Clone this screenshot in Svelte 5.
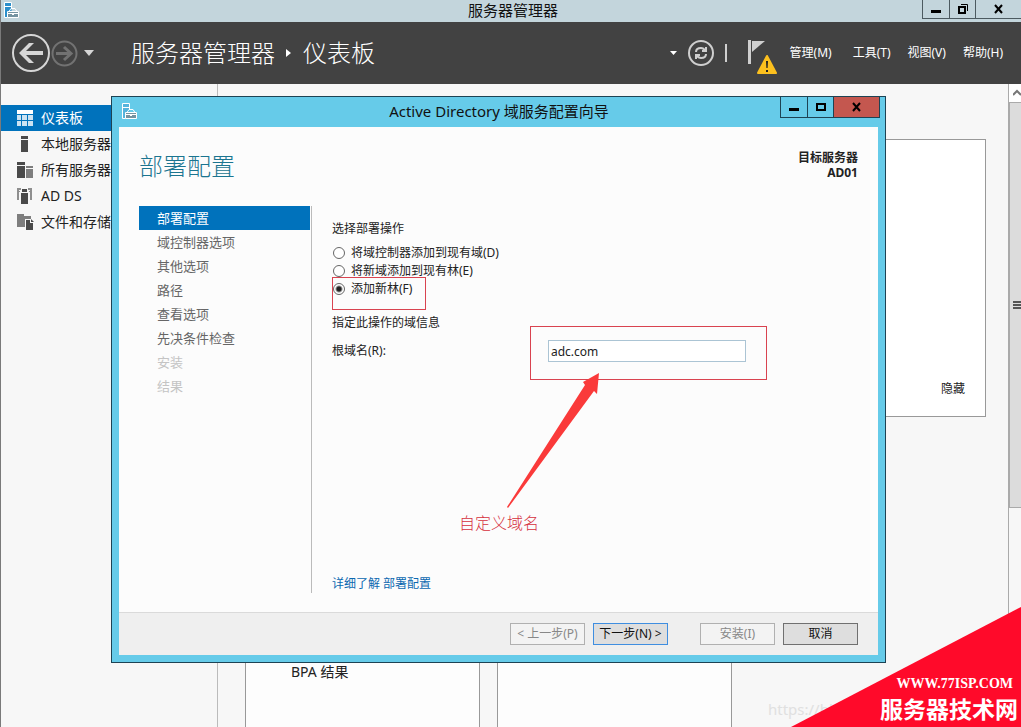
<script lang="ts">
  type NavItem = { id: string; label: string; icon: string };
  type Step = { label: string; disabled?: boolean };

  const navItems: NavItem[] = [
    { id: 'dashboard', label: '仪表板', icon: 'grid' },
    { id: 'local', label: '本地服务器', icon: 'server' },
    { id: 'all', label: '所有服务器', icon: 'servers' },
    { id: 'adds', label: 'AD DS', icon: 'adds' },
    { id: 'files', label: '文件和存储服务', icon: 'files' },
  ];

  const menus = ['管理(M)', '工具(T)', '视图(V)', '帮助(H)'];

  const steps: Step[] = [
    { label: '部署配置' },
    { label: '域控制器选项' },
    { label: '其他选项' },
    { label: '路径' },
    { label: '查看选项' },
    { label: '先决条件检查' },
    { label: '安装', disabled: true },
    { label: '结果', disabled: true },
  ];

  const operations = [
    { value: 'dc', label: '将域控制器添加到现有域(D)' },
    { value: 'domain', label: '将新域添加到现有林(E)' },
    { value: 'forest', label: '添加新林(F)' },
  ];

  let activeNav = $state('dashboard');
  let activeStep = $state(0);
  let operation = $state('forest');
  let rootDomain = $state('adc.com');
</script>

{#snippet appIcon(fill: string)}
  <svg class="app-icon" width="17" height="17" viewBox="0 0 17 17" aria-hidden="true">
    <path d="M1.500 .500h7v15h-7z" {fill} />
    <path d="M8.500 7V.5h-7v15h3M1.500 4.500h7" fill="none" stroke="#fff" />
    <path d="M4.500 9.500h11v6h-11z" fill="#7593a0" stroke="#fff" />
    <path d="M6 9.500l2-3h4l2 3M5 11.500h10" fill="none" stroke="#fff" />
    <path d="M9 11h2v2H9z" fill="#fff" />
  </svg>
{/snippet}

<div class="app">
  <header class="titlebar">
    {@render appIcon('#2b8fcb')}
    <div class="titlebar-text">服务器管理器</div>
    <div class="window-buttons">
      <button class="min" aria-label="最小化">
        <svg width="12" height="12" viewBox="0 0 12 12"><path d="M1 7h10v3H1z" /></svg>
      </button>
      <button class="max" aria-label="还原">
        <svg width="12" height="12" viewBox="0 0 12 12">
          <path d="M2 4h6v6H2z" fill="none" stroke="#000" stroke-width="2" />
          <path d="M4 1.500h6.500V8" fill="none" stroke="#000" />
        </svg>
      </button>
      <button class="close" aria-label="关闭">
        <svg width="12" height="12" viewBox="0 0 12 12">
          <path d="M2 2l7 8M9 2l-7 8" stroke="#000" stroke-width="2" />
        </svg>
      </button>
    </div>
  </header>

  <div class="toolbar">
    <button class="icon-button" aria-label="后退">
      <svg width="40" height="40" viewBox="0 0 40 40">
        <circle cx="20" cy="20" r="18" fill="none" stroke="#d6d6d6" stroke-width="2" />
        <path d="M8 20L18 10h5l-8 8h17v4H15l8 8h-5z" fill="#d6d6d6" />
      </svg>
    </button>
    <button class="icon-button" aria-label="前进">
      <svg width="27" height="27" viewBox="0 0 27 27">
        <circle cx="13.500" cy="13.500" r="12" fill="none" stroke="#727272" stroke-width="2" />
        <path d="M5 13.500h15M13 7l7 6.500-7 6.500" fill="none" stroke="#727272" stroke-width="3" />
      </svg>
    </button>
    <button class="icon-button history" aria-label="历史记录">
      <svg width="12" height="6" viewBox="0 0 12 6"><path d="M1 0h10L6 6z" fill="#d6d6d6" /></svg>
    </button>

    <div class="breadcrumb">
      <span>服务器管理器</span>
      <svg width="6" height="10" viewBox="0 0 6 10"><path d="M0 1l5 4-5 4z" fill="#fff" /></svg>
      <span>仪表板</span>
    </div>

    <div class="toolbar-right">
      <button class="icon-button" aria-label="更多">
        <svg width="8" height="5" viewBox="0 0 8 5"><path d="M0 0h7L3.500 4z" fill="#fff" /></svg>
      </button>
      <button class="icon-button refresh" aria-label="刷新">
        <svg width="28" height="28" viewBox="0 0 28 28" fill="none" stroke="#cfcfcf">
          <circle cx="14" cy="14" r="12" stroke-width="2" />
          <path d="M9 13c0-3 2-4 5-4 2 0 3 1 4 2M19 8v4h-4" stroke-width="2" />
          <path d="M19 15c0 3-2 4-5 4-2 0-3-1-4-2M9 20v-4h4" stroke-width="2" />
        </svg>
      </button>
      <span class="separator"></span>
      <button class="icon-button flag" aria-label="通知">
        <svg width="31" height="37" viewBox="0 0 31 37">
          <path d="M1 2h3v24H1z" fill="#cfcfcf" />
          <path d="M5 3h13L5 14z" fill="#cfcfcf" />
          <path d="M20 18l9 17H11z" fill="#fcc01e" stroke="#fcc01e" stroke-width="2" stroke-linejoin="round" />
          <path d="M19 23h2l-.4 7h-1.200zM19 32h2v2h-2z" fill="#222" />
        </svg>
      </button>
      <nav class="menus">
        {#each menus as menu}
          <button>{menu}</button>
        {/each}
      </nav>
    </div>
  </div>

  <div class="workspace">
    <nav class="sidebar">
      {#each navItems as item}
        <button class="nav-item" class:active={activeNav === item.id} onclick={() => (activeNav = item.id)}>
          <svg width="18" height="18" viewBox="0 0 18 18" fill="currentColor" aria-hidden="true">
            {#if item.icon === 'grid'}
              <path d="M1 1h16v4H1z" />
              <path d="M1 6h4v5H1zM6 6h5v5H6zM12 6h5v5h-5zM1 12h4v5H1zM6 12h5v5H6zM12 12h5v5h-5z" opacity=".8" />
            {:else if item.icon === 'server'}
              <path d="M5 1h7v3H5zM5 5h7v12H5z" />
            {:else if item.icon === 'servers'}
              <path d="M1 1h8v3H1zM1 5h8v12H1z" />
              <path d="M10 5h7v2h-7zM10 8h7v9h-7z" opacity=".7" />
            {:else if item.icon === 'adds'}
              <path d="M1 1h4v2H3v1h1v1H3v8H1zM16 1h-4v2h2v1h-1v1h1v8h2z" opacity=".6" />
              <path d="M6 2h5v3H6zM5 6h7v11H5z" />
            {:else}
              <path d="M1 1h7v2h7v3h-6v8H1z" opacity=".7" />
              <path d="M10 7h4v3h3v7h-7z" />
              <path d="M15 6l3 3h-3z" />
            {/if}
          </svg>
          <span>{item.label}</span>
        </button>
      {/each}
    </nav>

    <main class="content">
      <section class="welcome">
        <button class="hide-button">隐藏</button>
      </section>
      <div class="tiles">
        <section class="tile"><span>BPA 结果</span></section>
        <section class="tile"></section>
      </div>
    </main>

    <div class="scrollbar">
      <div class="scroll-up">
        <svg width="8" height="8" viewBox="0 0 8 8"><path d="M0 6l4-4 4 4" fill="none" stroke="#777" stroke-width="2" /></svg>
      </div>
      <div class="thumb">
        <svg width="8" height="8" viewBox="0 0 8 8"><path d="M0 1h8M0 4h8M0 7h8" stroke="#555" stroke-width="2" /></svg>
      </div>
    </div>
  </div>

  <div class="dialog" role="dialog" aria-labelledby="wizard-title">
    <div class="dialog-bar">
      {@render appIcon('#55b4dc')}
      <div class="titlebar-text" id="wizard-title">Active Directory 域服务配置向导</div>
      <div class="window-buttons">
        <button class="min" aria-label="最小化">
          <svg width="12" height="12" viewBox="0 0 12 12"><path d="M1 7h10v3H1z" /></svg>
        </button>
        <button class="max" aria-label="最大化">
          <svg width="12" height="12" viewBox="0 0 12 12">
            <path d="M2 3h8v6H2z" fill="none" stroke="#000" stroke-width="2" />
          </svg>
        </button>
        <button class="close" aria-label="关闭">
          <svg width="12" height="12" viewBox="0 0 12 12">
            <path d="M2 2l7 8M9 2l-7 8" stroke="#000" stroke-width="2" />
          </svg>
        </button>
      </div>
    </div>

    <div class="dialog-page">
      <div class="page-head">
        <h1>部署配置</h1>
        <div class="target">
          <div>目标服务器</div>
          <div>AD01</div>
        </div>
      </div>

      <div class="page-body">
        <div class="steps">
          {#each steps as step, i}
            <button class:active={activeStep === i} disabled={step.disabled} onclick={() => (activeStep = i)}>
              {step.label}
            </button>
          {/each}
        </div>

        <form class="form" onsubmit={(e) => e.preventDefault()}>
          <fieldset>
            <legend>选择部署操作</legend>
            {#each operations as op}
              <label class="radio">
                <input type="radio" name="operation" value={op.value} bind:group={operation} />
                <span>{op.label}</span>
              </label>
            {/each}
          </fieldset>

          <p class="section-label">指定此操作的域信息</p>
          <div class="field">
            <label for="root-domain">根域名(R):</label>
            <input id="root-domain" type="text" bind:value={rootDomain} />
          </div>

          <a class="more" href="#learn">详细了解 部署配置</a>

          <!-- red callouts drawn over the form -->
          <svg class="callout" width="440" height="310" viewBox="0 0 440 310" aria-hidden="true">
            <rect x="0.500" y="71.500" width="93" height="32" />
            <rect x="198.500" y="120.500" width="236" height="53" />
            <path d="M267 167l-16 9 2 3-78 122 1 1 86-117 3 3z" />
          </svg>
          <span class="callout-text">自定义域名</span>
        </form>
      </div>

      <div class="page-foot">
        <button disabled>&lt; 上一步(P)</button>
        <button class="primary">下一步(N) &gt;</button>
        <button class="spaced" disabled>安装(I)</button>
        <button>取消</button>
      </div>
    </div>
  </div>

  <span class="watermark">https://blog.csdn</span>

  <div class="ribbon">
    <span class="ribbon-url">WWW.77ISP.COM</span>
    <span class="ribbon-name">服务器技术网</span>
  </div>
</div>

<style>
  :global(body) {
    margin: 0;
  }

  .app {
    position: relative;
    display: flex;
    flex-direction: column;
    box-sizing: border-box;
    height: 100vh;
    min-height: 700px;
    overflow: hidden;
    border-left: 1px solid #7a7a7a;
    background: #f7f7f7;
    color: #222;
    font-family: 'Noto Sans', 'Noto Sans CJK SC', sans-serif;
    font-size: 12px;
    line-height: 18px;
  }

  button {
    margin: 0;
    padding: 0;
    border: none;
    background: none;
    color: inherit;
    font: inherit;
    white-space: nowrap;
  }

  svg {
    display: block;
    flex: none;
  }

  /* window chrome */
  .titlebar {
    display: flex;
    flex: none;
    justify-content: space-between;
    height: 22px;
    padding-left: 2px;
    background: #c3d5dc;
  }
  .titlebar .app-icon {
    margin-top: 2px;
  }
  .titlebar-text {
    flex: 1;
    color: #111;
    font-size: 15px;
    line-height: 20px;
    text-align: center;
  }
  .titlebar .titlebar-text {
    padding-left: 84px;
  }

  .window-buttons {
    display: flex;
    height: 18px;
    border: 1px solid #4c5a60;
    border-top: none;
  }
  .titlebar .window-buttons {
    border-right: none;
  }
  .window-buttons button {
    display: flex;
    align-items: center;
    justify-content: center;
    width: 27px;
    border-right: 1px solid #4c5a60;
  }
  .window-buttons .max {
    width: 26px;
  }
  .window-buttons .close {
    width: 45px;
    border-right: none;
  }

  /* toolbar */
  .toolbar {
    display: flex;
    flex: none;
    align-items: center;
    height: 62px;
    padding: 0 18px 0 10px;
    background: #424242;
    color: #fff;
  }
  .icon-button {
    display: flex;
    align-items: center;
  }
  .history {
    margin-left: 5px;
  }
  .breadcrumb {
    display: flex;
    align-items: center;
    gap: 11px;
    margin-left: 36px;
    font-size: 24px;
    font-weight: 300;
    line-height: 36px;
    white-space: nowrap;
  }
  .toolbar-right {
    display: flex;
    align-items: center;
    margin-left: auto;
  }
  .refresh {
    margin-left: 9px;
  }
  .separator {
    width: 2px;
    height: 18px;
    margin: 0 20px 0 10px;
    background: #cfcfcf;
  }
  .flag {
    margin-top: 6px;
  }
  .menus {
    display: flex;
    gap: 17px;
    margin-left: 12px;
    line-height: 20px;
  }
  .menus button:first-child {
    margin-right: 4px;
  }

  /* dashboard behind the wizard */
  .workspace {
    display: flex;
    flex: 1;
    min-height: 0;
  }
  .sidebar {
    box-sizing: border-box;
    flex: none;
    width: 217px;
    padding-top: 21px;
    border-right: 1px solid #bbb;
  }
  .nav-item {
    display: flex;
    align-items: center;
    gap: 7px;
    width: 100%;
    height: 26px;
    padding-left: 15px;
    color: #4a4a4a;
    font-size: 14px;
  }
  .nav-item span {
    color: #222;
  }
  .nav-item.active,
  .nav-item.active span {
    color: #fff;
  }
  .nav-item.active {
    background: #0072bc;
  }

  .content {
    display: flex;
    flex: 1;
    flex-direction: column;
    gap: 20px;
    padding: 55px 22px 0 27px;
  }
  .welcome {
    display: flex;
    flex: none;
    align-items: flex-end;
    justify-content: flex-end;
    box-sizing: border-box;
    height: 278px;
    padding: 18px 20px;
    border: 1px solid #999;
    background: #fff;
  }
  .tiles {
    display: flex;
    flex: 1;
    gap: 17px;
  }
  .tile {
    display: flex;
    align-items: flex-end;
    box-sizing: border-box;
    width: 235px;
    padding: 0 45px 46px;
    border: 1px solid #999;
    border-bottom: none;
    background: #fdfdfd;
    font-size: 14px;
  }

  .scrollbar {
    display: flex;
    flex: none;
    flex-direction: column;
    width: 13px;
    box-sizing: border-box;
    border-left: 1px solid #aaa;
  }
  .scroll-up {
    display: flex;
    flex: none;
    align-items: center;
    justify-content: flex-end;
    height: 18px;
    background: #fff;
  }
  .thumb {
    display: flex;
    align-items: center;
    justify-content: flex-end;
    height: 404px;
    border: 1px solid #aaa;
    border-right: none;
    background: #dcdcdc;
  }

  /* wizard */
  .dialog {
    position: absolute;
    top: 96px;
    right: 135px;
    left: 110px;
    display: flex;
    flex-direction: column;
    border: 1px solid #1d4354;
    background: #66cbe9;
  }
  .dialog-bar {
    display: flex;
    height: 30px;
    padding: 0 5px 0 9px;
  }
  .dialog-bar .app-icon {
    margin-top: 6px;
  }
  .dialog-bar .titlebar-text {
    padding-left: 80px;
    line-height: 28px;
  }
  .dialog-bar .window-buttons {
    height: 20px;
    border-color: #1d4354;
  }
  .dialog-bar .window-buttons button {
    border-color: #1d4354;
  }
  .dialog-bar .close {
    background: #c4574f;
  }

  .dialog-page {
    display: flex;
    flex-direction: column;
    margin: 0 7px 7px;
    background: #fcfcfc;
  }
  .page-head {
    display: flex;
    align-items: flex-start;
    justify-content: space-between;
    height: 58px;
    padding: 21px 20px 0;
  }
  h1 {
    margin: 0;
    color: #1b7590;
    font-size: 24px;
    font-weight: 300;
    line-height: 36px;
  }
  .target {
    margin-top: 2px;
    font-weight: 700;
    line-height: 15px;
    text-align: right;
  }

  .page-body {
    display: flex;
    gap: 20px;
    height: 387px;
    padding: 0 20px 19px;
  }
  .steps {
    display: flex;
    flex: none;
    flex-direction: column;
    box-sizing: border-box;
    width: 173px;
    padding-right: 1px;
    border-right: 1px solid #bbb;
  }
  .steps button {
    height: 24px;
    padding-left: 18px;
    color: #666;
    font-size: 13px;
    text-align: left;
  }
  .steps button:disabled {
    color: #c4c4c4;
  }
  .steps .active {
    background: #0072bc;
    color: #fff;
  }

  .form {
    position: relative;
    display: flex;
    flex: 1;
    flex-direction: column;
    align-items: flex-start;
    padding-top: 14px;
  }
  fieldset {
    min-width: 0;
    margin: 0;
    padding: 0;
    border: none;
  }
  legend {
    margin-bottom: 6px;
    padding: 0;
  }
  .radio {
    display: flex;
    align-items: center;
    gap: 6px;
    height: 18px;
  }
  .radio input {
    appearance: none;
    box-sizing: border-box;
    width: 12px;
    height: 12px;
    margin: 0 0 0 1px;
    border: 1px solid #666;
    border-radius: 50%;
    background: #fff;
  }
  .radio input:checked {
    background: radial-gradient(circle, #222 2px, #fff 4px);
  }
  .section-label {
    margin: 16px 0 8px;
  }
  .field {
    display: flex;
    align-items: center;
  }
  .field label {
    width: 216px;
  }
  .field input {
    box-sizing: border-box;
    width: 198px;
    height: 22px;
    padding: 0 2px;
    border: 1px solid #abc4d4;
    background: #fff;
    color: #222;
    font: inherit;
    outline: none;
  }
  .more {
    margin-top: auto;
    color: #0b68b0;
    text-decoration: none;
  }

  .callout {
    position: absolute;
    top: 0;
    left: 0;
    pointer-events: none;
  }
  .callout rect {
    fill: none;
    stroke: #d94350;
  }
  .callout path {
    fill: #fa3a3a;
  }
  .callout-text {
    position: absolute;
    top: 305px;
    left: 127px;
    color: #d6303c;
    font-size: 16px;
    font-weight: 300;
    line-height: 24px;
  }

  .page-foot {
    display: flex;
    gap: 8px;
    justify-content: flex-end;
    padding: 10px 20px;
    border-top: 1px solid #dadada;
    background: #efefef;
  }
  .page-foot button {
    box-sizing: border-box;
    width: 75px;
    height: 22px;
    border: 1px solid #707070;
    background: #dedede;
    color: #111;
  }
  .page-foot button:disabled {
    border-color: #b0b0b0;
    background: #f3f3f3;
    color: #888;
  }
  .page-foot .primary {
    border-color: #3f8ee0;
  }
  .page-foot .spaced {
    margin-left: 24px;
  }

  /* site mark in the corner */
  .watermark {
    position: absolute;
    right: 133px;
    bottom: 8px;
    color: #e0e0e0;
    font-size: 15px;
    line-height: 20px;
  }
  .ribbon {
    position: absolute;
    right: 0;
    bottom: 0;
    display: flex;
    flex-direction: column;
    align-items: flex-end;
    justify-content: flex-end;
    box-sizing: border-box;
    width: 230px;
    height: 120px;
    padding: 0 3px 2px 0;
    background: #ff0a2a;
    clip-path: polygon(100% 0, 100% 100%, 0 100%);
    color: #fff;
    font-weight: 700;
  }
  .ribbon-url {
    padding-right: 5px;
    font-family: 'Liberation Serif', serif;
    font-size: 14px;
    line-height: 18px;
  }
  .ribbon-name {
    font-size: 23px;
    line-height: 32px;
  }
</style>
